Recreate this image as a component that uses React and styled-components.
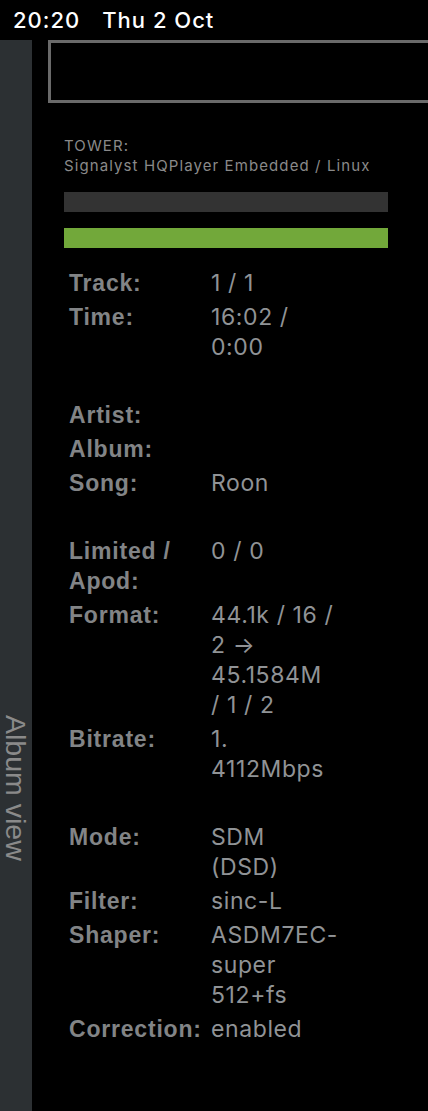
import React from "react";
import styled, { createGlobalStyle } from "styled-components";

const rows = [
  { label: "Track:", value: "1 / 1" },
  { label: "Time:", value: "16:02 / 0:00" },
  { spacer: true },
  { label: "Artist:", value: "" },
  { label: "Album:", value: "" },
  { label: "Song:", value: "Roon" },
  { spacer: true },
  { label: "Limited / Apod:", value: "0 / 0" },
  { label: "Format:", value: "44.1k / 16 / 2 → 45.1584M / 1 / 2" },
  { label: "Bitrate:", value: <>1.<wbr />4112Mbps</> },
  { spacer: true },
  { label: "Mode:", value: "SDM (DSD)" },
  { label: "Filter:", value: "sinc-L" },
  { label: "Shaper:", value: "ASDM7EC-super 512+fs" },
  { label: "Correction:", value: "enabled" },
];

function App() {
  return (
    <>
      <GlobalStyle />
      <Page>
        <StatusBar>
          <span>20:20</span>
          <span>Thu 2 Oct</span>
        </StatusBar>
        <Body>
          <SideTab>
            <SideLabel>Album view</SideLabel>
          </SideTab>
          <Main>
            <SearchBox />
            <Content>
              <Zone>
                TOWER:
                <br />
                Signalyst HQPlayer Embedded / Linux
              </Zone>
              <Bar color="#333333" />
              <Bar color="#72a83a" />
              <InfoTable>
                <colgroup>
                  <col style={{ width: 147 }} />
                  <col style={{ width: 123 }} />
                </colgroup>
                <tbody>
                  {rows.map((row, idx) =>
                    row.spacer ? (
                      <tr key={idx}>
                        <Spacer colSpan={2}>&nbsp;</Spacer>
                      </tr>
                    ) : (
                      <tr key={idx}>
                        <Label>{row.label}</Label>
                        <Value>{row.value}</Value>
                      </tr>
                    )
                  )}
                </tbody>
              </InfoTable>
            </Content>
          </Main>
        </Body>
      </Page>
    </>
  );
}

export default App;

const GlobalStyle = createGlobalStyle`
  html, body {
    margin: 0;
    padding: 0;
    background: #000;
  }
  body {
    font-family: Inter, "Noto Sans", sans-serif;
  }
`;

const Page = styled.div`
  width: 428px;
  height: 1111px;
  background: #000;
  display: flex;
  flex-direction: column;
  overflow: hidden;
`;

const StatusBar = styled.div`
  height: 40px;
  flex-shrink: 0;
  display: flex;
  align-items: center;
  gap: 22px;
  padding-left: 13px;
  color: #fff;
  font-size: 22px;
  font-weight: 500;
  letter-spacing: 1px;
`;

const Body = styled.div`
  flex: 1;
  display: flex;
  min-height: 0;
`;

const SideTab = styled.div`
  width: 32px;
  flex-shrink: 0;
  background: #2c3033;
  display: flex;
  justify-content: center;
  padding-top: 675px;
  box-sizing: border-box;
`;

const SideLabel = styled.div`
  writing-mode: vertical-rl;
  color: #8a8a8a;
  font-size: 28.5px;
  line-height: 32px;
  height: fit-content;
  font-family: "Liberation Sans", Arial, sans-serif;
`;

const Main = styled.div`
  flex: 1;
  padding-left: 16px;
  overflow: hidden;
`;

const SearchBox = styled.div`
  width: 420px;
  height: 57px;
  border: 3px solid #6a6a6a;
`;

const Content = styled.div`
  padding: 33px 40px 0 16px;
  display: flex;
  flex-direction: column;
`;

const Zone = styled.div`
  color: #8a8a8a;
  font-size: 15px;
  line-height: 20px;
  letter-spacing: 1.1px;
  margin-bottom: 16px;
`;

const Bar = styled.div`
  height: 20px;
  background: ${(p) => p.color};
  margin-bottom: 16px;
`;

const InfoTable = styled.table`
  border-collapse: collapse;
  table-layout: fixed;
  width: 270px;
  margin-top: 2px;
  font-size: 22px;
  line-height: 30px;
`;

const Label = styled.td`
  padding: 2px 3px 2px 5px;
  vertical-align: top;
  color: #828486;
  font-size: 23px;
  font-weight: 700;
  letter-spacing: 0.8px;
  font-family: "Liberation Sans", Arial, sans-serif;
`;

const Value = styled.td`
  padding: 2px 0;
  vertical-align: top;
  color: #909396;
  font-size: 23px;
  letter-spacing: 0.6px;
`;

const Spacer = styled.td`
  padding: 2px 0;
`;
